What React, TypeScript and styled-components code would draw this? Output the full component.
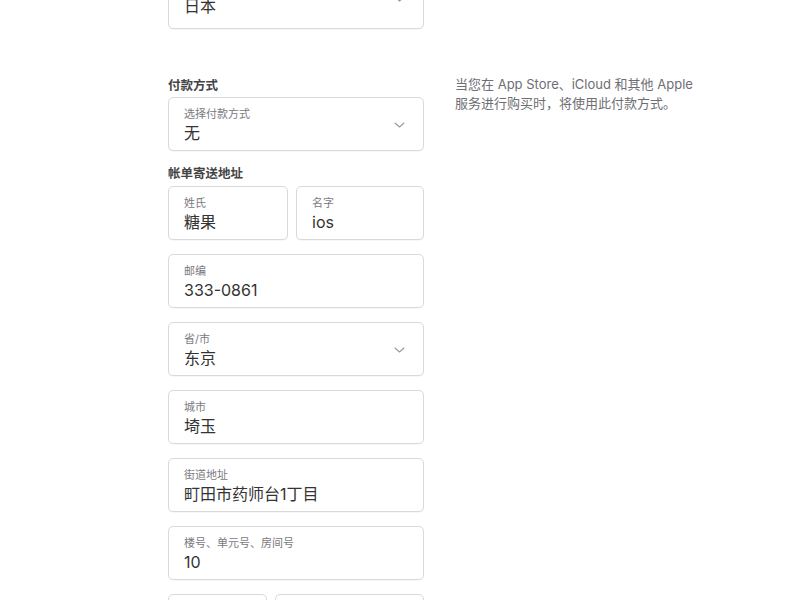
import styled, { createGlobalStyle } from 'styled-components'

const GlobalStyle = createGlobalStyle`
  html, body {
    margin: 0;
    padding: 0;
    background: #ffffff;
    overflow: hidden;
  }
  body {
    font-family: Inter, "Noto Sans CJK SC", sans-serif;
    color: #333333;
  }
`

function Chevron() {
  return (
    <ChevronIcon width="11" height="6" viewBox="0 0 11 6" fill="none">
      <path d="M1 1l4.5 4L10 1" stroke="#9a9a9e" strokeWidth="1.1" strokeLinecap="round" strokeLinejoin="round" />
    </ChevronIcon>
  )
}

type FieldProps = {
  label?: string
  value: string
  select?: boolean
  tall?: boolean
}

function Field({ label, value, select, tall }: FieldProps) {
  return (
    <FieldBox $tall={tall}>
      <FieldText>
        {label && <FieldLabel>{label}</FieldLabel>}
        <FieldValue>{value}</FieldValue>
      </FieldText>
      {select && <Chevron />}
    </FieldBox>
  )
}

export default function App() {
  return (
    <>
      <GlobalStyle />
      <Page>
        <Form>
          <Field label="国家或地区" value="日本" select tall />

          <PaymentSection>
            <SectionTitle>付款方式</SectionTitle>
            <Field label="选择付款方式" value="无" select />
          </PaymentSection>

          <Section>
            <SectionTitle>帐单寄送地址</SectionTitle>
            <Fields>
              <NameRow>
                <Field label="姓氏" value="糖果" />
                <Field label="名字" value="ios" />
              </NameRow>
              <Field label="邮编" value="333-0861" />
              <Field label="省/市" value="东京" select />
              <Field label="城市" value="埼玉" />
              <Field label="街道地址" value="町田市药师台1丁目" />
              <Field label="楼号、单元号、房间号" value="10" />
              <PhoneRow>
                <Field label="区号" value="" />
                <Field label="电话号码" value="" />
              </PhoneRow>
            </Fields>
          </Section>
        </Form>

        <Aside>
          <Note>当您在 App Store、iCloud 和其他 Apple 服务进行购买时，将使用此付款方式。</Note>
        </Aside>
      </Page>
    </>
  )
}

const Page = styled.div`
  display: flex;
  align-items: flex-start;
  padding-left: 168px;
  margin-top: -34px;
`

const Form = styled.div`
  width: 256px;
  display: flex;
  flex-direction: column;
`

const Aside = styled.div`
  width: 252px;
  margin-left: 31px;
  padding-top: 109px;
`

const Note = styled.p`
  margin: 0;
  font-size: 13px;
  line-height: 19px;
  color: #6e6e73;
`

const Section = styled.div`
  display: flex;
  flex-direction: column;
  margin-top: 14px;
`

const PaymentSection = styled(Section)`
  margin-top: 48px;
`

const SectionTitle = styled.h3`
  margin: 0 0 2px 0;
  font-size: 12.5px;
  line-height: 18px;
  font-weight: 700;
  color: #444444;
`

const Fields = styled.div`
  display: flex;
  flex-direction: column;
  gap: 14px;
  margin-top: 1px;
`

const NameRow = styled.div`
  display: grid;
  grid-template-columns: 120px 1fr;
  gap: 8px;
`

const PhoneRow = styled.div`
  display: grid;
  grid-template-columns: 99px 1fr;
  gap: 8px;
`

const FieldBox = styled.div<{ $tall?: boolean }>`
  box-sizing: border-box;
  height: ${(p) => (p.$tall ? '63px' : '54px')};
  border: 1px solid #d9d9dc;
  border-radius: 5px;
  background: #ffffff;
  display: flex;
  align-items: center;
  padding: 2px 18px 0 15px;
  box-shadow: 0 1px 1px rgba(0, 0, 0, 0.03);
`

const FieldText = styled.div`
  flex: 1;
  display: flex;
  flex-direction: column;
  min-width: 0;
`

const FieldLabel = styled.span`
  font-size: 11px;
  line-height: 14px;
  color: #7a7a7f;
  white-space: nowrap;
`

const FieldValue = styled.span`
  font-size: 16px;
  line-height: 22px;
  min-height: 22px;
  margin-top: 1px;
  color: #333333;
  white-space: nowrap;
`

const ChevronIcon = styled.svg`
  flex: none;
  display: block;
`
